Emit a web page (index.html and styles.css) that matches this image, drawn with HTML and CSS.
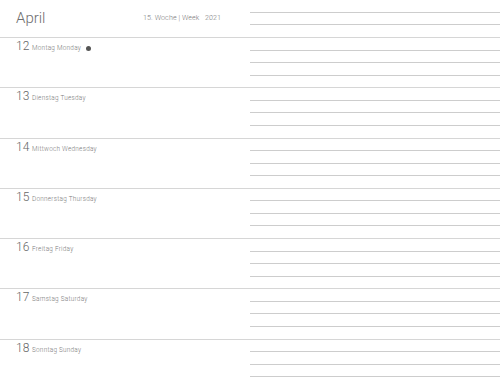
FILE: index.html
```html
<!DOCTYPE html>
<html>
<head>
<meta charset="utf-8">
<link rel="stylesheet" href="styles.css">
</head>
<body>
<div class="page">
  <div class="row head">
    <div class="left head-left">
      <span class="month">April</span>
      <span class="week">15. Woche | Week&nbsp;&nbsp;&nbsp;2021</span>
    </div>
    <div class="right"><div class="ln"></div><div class="ln"></div></div>
  </div>
  <div class="row day">
    <div class="left"><span class="num">12</span><span class="name">Montag Monday</span><span class="dot"></span></div>
    <div class="right"><div class="ln"></div><div class="ln"></div><div class="ln"></div></div>
  </div>
  <div class="row day">
    <div class="left"><span class="num">13</span><span class="name">Dienstag Tuesday</span></div>
    <div class="right"><div class="ln"></div><div class="ln"></div><div class="ln"></div></div>
  </div>
  <div class="row day">
    <div class="left"><span class="num">14</span><span class="name">Mittwoch Wednesday</span></div>
    <div class="right"><div class="ln"></div><div class="ln"></div><div class="ln"></div></div>
  </div>
  <div class="row day">
    <div class="left"><span class="num">15</span><span class="name">Donnerstag Thursday</span></div>
    <div class="right"><div class="ln"></div><div class="ln"></div><div class="ln"></div></div>
  </div>
  <div class="row day">
    <div class="left"><span class="num">16</span><span class="name">Freitag Friday</span></div>
    <div class="right"><div class="ln"></div><div class="ln"></div><div class="ln"></div></div>
  </div>
  <div class="row day">
    <div class="left"><span class="num">17</span><span class="name">Samstag Saturday</span></div>
    <div class="right"><div class="ln"></div><div class="ln"></div><div class="ln"></div></div>
  </div>
  <div class="row day">
    <div class="left"><span class="num">18</span><span class="name">Sonntag Sunday</span></div>
    <div class="right"><div class="ln"></div><div class="ln"></div><div class="ln"></div></div>
  </div>
</div>
</body>
</html>
```
FILE: styles.css
```css
html, body {
  margin: 0;
  padding: 0;
  background: #fff;
}
.page {
  width: 500px;
  height: 389px;
  display: grid;
  grid-template-rows: 37px repeat(7, 1fr);
  font-family: "Roboto", "DejaVu Sans Condensed", sans-serif;
  color: #7a7a7a;
  overflow: hidden;
}
.row {
  display: grid;
  grid-template-columns: 250px 1fr;
}
.day {
  border-top: 1.5px solid #d6d6d6;
}
.left {
  display: flex;
  align-items: baseline;
  padding-left: 16px;
}
.head-left {
  align-items: center;
  padding-bottom: 2px;
}
.month {
  font-size: 15px;
  font-weight: 300;
  color: #6e6e6e;
  width: 127px;
}
.week {
  font-size: 7.1px;
  font-weight: 300;
  color: #7a7a7a;
  letter-spacing: 0.1px;
}
.day .left {
  padding-top: 1px;
  height: 14px;
}
.num {
  font-size: 12px;
  font-weight: 300;
  color: #666;
  width: 16px;
}
.name {
  font-size: 6.4px;
  font-weight: 300;
  color: #7a7a7a;
  letter-spacing: 0.25px;
}
.dot {
  width: 5px;
  height: 5px;
  border-radius: 50%;
  background: #555;
  margin-left: 5px;
  align-self: center;
  margin-top: 4px;
}
.right {
  display: flex;
  flex-direction: column;
}
.ln {
  height: 12.5px;
  flex: none;
  border-bottom: 1px solid #cdcdcd;
  box-sizing: border-box;
}
```
